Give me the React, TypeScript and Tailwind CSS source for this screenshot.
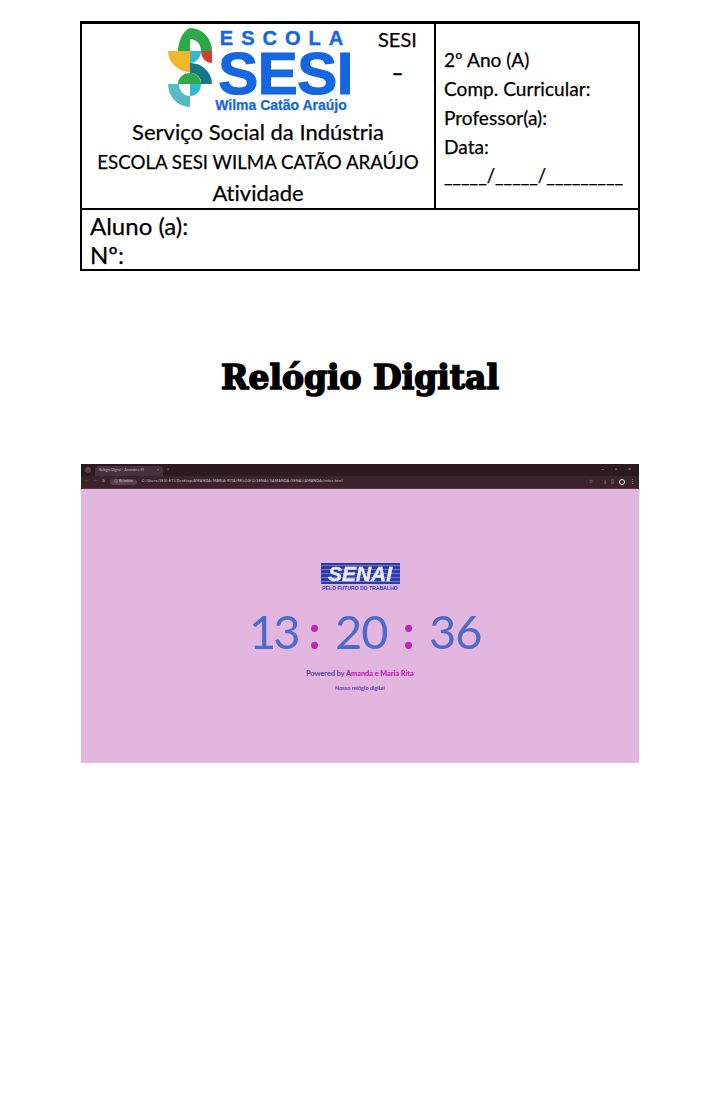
import React from 'react';

const LogoMark = () => (
  <svg width="46" height="80" viewBox="0 0 46 80" className="shrink-0">
    <path d="M23 0 A 22 23 0 0 1 45 23 L34 23 A 11 12 0 0 0 23 11 Z" fill="#2fa84a" />
    <path d="M11 23 C11 15 15 3 23 0 L23 23 Z" fill="#2fa84a" />
    <path d="M1 23 L23 23 L23 44 A 22 21 0 0 1 1 23 Z" fill="#f0b62c" />
    <path d="M23 23 L34 23 A 11 12 0 0 1 23 35 Z" fill="#2fb8cf" />
    <path d="M34 23 L45 23 L45 35 A 11 12 0 0 1 34 23 Z" fill="#d33f2e" />
    <path d="M23 35 A 22 21 0 0 1 45 56 L34 56 A 11 10 0 0 0 23 45 Z" fill="#14788a" />
    <path d="M11 56 A 12 11 0 0 1 23 45 A 11 11 0 0 1 34 56 Z" fill="#2fa84a" />
    <path d="M23 56 L34 56 A 11 12 0 0 1 23 68 Z" fill="#2fb8cf" />
    <path d="M1 56 L12 56 A 11 12 0 0 0 23 68 L23 79 A 22 23 0 0 1 1 56 Z" fill="#55bcc4" />
  </svg>
);

const SenaiLogo = () => (
  <div className="flex flex-col items-center">
    <div className="relative flex h-[21px] w-[79px] items-center justify-center overflow-hidden bg-[#2a3da8]">
      <div className="absolute inset-0 flex flex-col justify-around">
        <div className="h-px bg-[#6a76c6]" />
        <div className="h-px bg-[#6a76c6]" />
        <div className="h-px bg-[#6a76c6]" />
        <div className="h-px bg-[#6a76c6]" />
        <div className="h-px bg-[#6a76c6]" />
      </div>
      <span className="relative text-[21px] leading-none font-bold italic text-[#f1e8f5] [-webkit-text-stroke:0.4px] [font-family:'Liberation_Sans',sans-serif]">
        SENAI
      </span>
    </div>
    <span className="mt-[1px] whitespace-nowrap text-[5.1px] leading-[7px] font-bold text-[#2a3da8] [font-family:'Liberation_Sans',sans-serif]">
      PELO FUTURO DO TRABALHO
    </span>
  </div>
);

const BrowserShot = () => (
  <div className="mx-[81px] mt-[64px] h-[299px] bg-[#e3b6e0] [font-family:Lato,sans-serif]">
    <div className="flex h-[12px] items-center gap-1 bg-[#2c1a20] px-1 text-[3.5px] text-[#c9bcc0]">
      <div className="h-[6px] w-[6px] rounded-full bg-[#55444a]" />
      <div className="flex h-[10px] w-[68px] items-center justify-between self-end rounded-t-sm bg-[#46303a] px-1">
        <span className="whitespace-nowrap">Relógio Digital - Amanda e M</span>
        <span>×</span>
      </div>
      <span>+</span>
      <div className="ml-auto flex gap-[11px] pr-1 text-[5px] text-[#c9bcc0]">
        <span>–</span>
        <span>▫</span>
        <span>×</span>
      </div>
    </div>
    <div className="flex h-[13px] items-center gap-[5px] border-b border-[#523a42] bg-[#3a242b] px-1 text-[3.5px] text-[#d8ccd0]">
      <span className="text-[#8c7a80]">←</span>
      <span className="text-[#8c7a80]">→</span>
      <span>↻</span>
      <span className="rounded-full bg-[#55404a] px-1 whitespace-nowrap">Ⓘ Relatório</span>
      <span className="tracking-[0.3px] whitespace-nowrap">C:/Users/SESI-ETI/Desktop/AMANDA/MARIA-RITA/RELOGIO/SENAI/SAMANDA/SENAI/AMANDA/index.html</span>
      <div className="ml-auto flex items-center gap-[5px] text-[5px]">
        <span>☆</span>
        <span className="ml-[6px]">⤓</span>
        <span>▯</span>
        <div className="h-[6px] w-[6px] rounded-full border-[1.5px] border-[#eee]" />
        <span>⋮</span>
      </div>
    </div>
    <div className="flex flex-col items-center pt-[74px] blur-[0.3px]">
      <SenaiLogo />
      <div className="mt-[11px] ml-[10px] flex h-[56px] items-center text-[47px] leading-none tracking-[-1px] text-[#4a6ccb]">
        <span className="w-[44px] text-center tracking-[-3px] whitespace-nowrap">13</span>
        <span className="w-[42px] text-center font-bold text-[#c02ab2]">:</span>
        <span className="w-[52px] text-center">20</span>
        <span className="w-[42px] text-center font-bold text-[#c02ab2]">:</span>
        <span className="w-[52px] text-center">36</span>
      </div>
      <p className="mt-[10px] text-[7.3px] leading-[10px] font-bold text-[#6a55b8] [-webkit-text-stroke:0.2px]">
        Powered by <span className="text-[#c02ab2]">Amanda e Maria Rita</span>
      </p>
      <p className="mt-[5px] text-[5.5px] leading-[8px] font-bold text-[#6a55b8] [-webkit-text-stroke:0.15px]">Nosso relógio digital</p>
    </div>
  </div>
);

export default function App() {
  return (
    <div className="h-[1111px] overflow-hidden bg-white pt-[21px] text-black [font-family:Lato,sans-serif] [font-variant-ligatures:none]">
      <div className="mx-[80px] border-2 border-t-[3px] border-black [-webkit-text-stroke:0.25px]">
        <div className="flex h-[184px]">
          <div className="w-[354px] border-r-2 border-black">
            <div className="flex h-[90px] pt-[4px] pl-[85px]">
              <LogoMark />
              <div className="ml-[6px] flex w-[133px] flex-col items-center text-[#1467e0] [font-family:'Liberation_Sans',sans-serif]">
                <span className="mt-[1px] text-[20px] leading-[19px] font-bold tracking-[8px] whitespace-nowrap [-webkit-text-stroke:0.4px]">ESCOLA</span>
                <span className="mt-[1px] text-[60px] leading-[50px] font-bold tracking-[-0.5px] [-webkit-text-stroke:1.2px]">SESI</span>
                <span className="mr-[9px] -mt-[1px] text-[14px] leading-[14px] font-bold whitespace-nowrap">Wilma Catão Araújo</span>
              </div>
              <div className="-mt-[3px] ml-[26px] flex flex-col items-center text-[20px] leading-[28px]">
                <span>SESI</span>
                <span className="mt-[5px] font-bold">–</span>
              </div>
            </div>
            <p className="mt-[3px] text-center text-[22px] leading-[30px]">Serviço Social da Indústria</p>
            <p className="text-center text-[18.7px] leading-[30px] whitespace-nowrap">ESCOLA SESI WILMA CATÃO ARAÚJO</p>
            <p className="text-center text-[22px] leading-[31px]">Atividade</p>
          </div>
          <div className="flex-1 pt-[21px] pl-[8px] text-[19.1px] leading-[29px]">
            <p>2º Ano (A)</p>
            <p>Comp. Curricular:</p>
            <p>Professor(a):</p>
            <p>Data:</p>
            <p className="text-[18.6px] whitespace-nowrap">_____/_____/_________</p>
          </div>
        </div>
        <div className="h-[61px] border-t-2 border-black px-[8px] pt-[1px] text-[24px] leading-[29px]">
          <p>Aluno (a):</p>
          <p>Nº:</p>
        </div>
      </div>
      <h1 className="mt-[85px] text-center text-[33px] leading-[44px] font-bold text-black [-webkit-text-stroke:1.6px_#000] [font-family:'DejaVu_Serif',serif]">
        Relógio Digital
      </h1>
      <BrowserShot />
    </div>
  );
}
